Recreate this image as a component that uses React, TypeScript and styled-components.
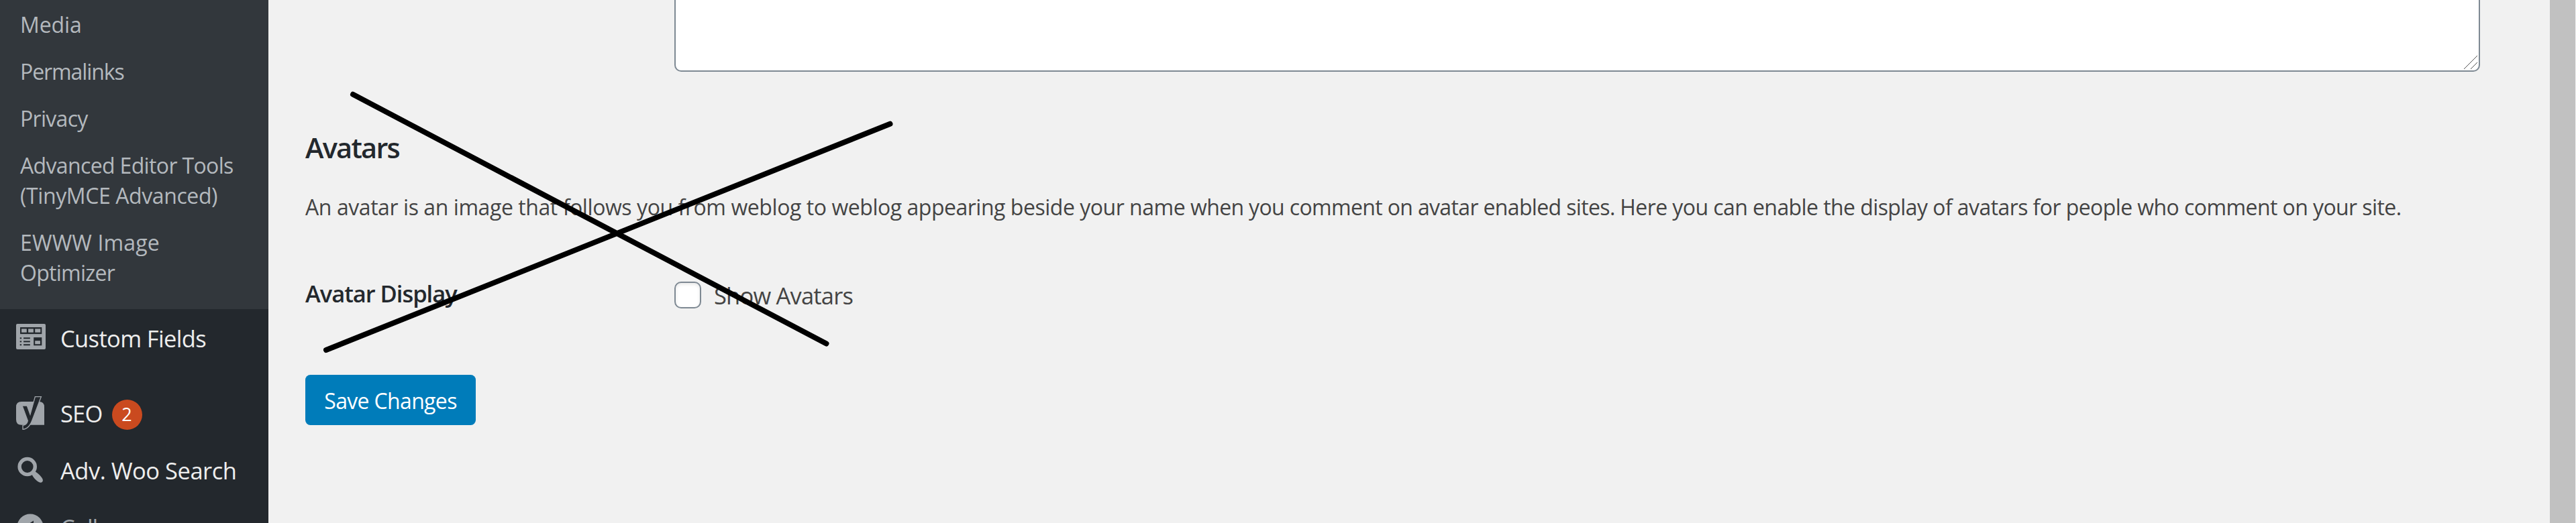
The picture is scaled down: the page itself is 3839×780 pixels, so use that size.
import React from "react";
import styled, { createGlobalStyle } from "styled-components";

const GlobalStyle = createGlobalStyle`
  *, *::before, *::after { box-sizing: border-box; }
  body {
    margin: 0;
    overflow: hidden;
    background: #f1f1f1;
    color: #444;
    font-family: "Open Sans", "Noto Sans", sans-serif;
  }
  svg { display: block; }
`;

const Page = styled.div`
  position: relative;
  display: flex;
  height: 780px;
  overflow: hidden;
`;

const Sidebar = styled.nav`
  flex: 0 0 400px;
  height: 780px;
  overflow: hidden;
  background: #23282d;
`;

const Submenu = styled.ul`
  height: 461px;
  margin: 0 0 1px;
  padding: 2px 0 0;
  list-style: none;
  background: #32373c;
`;

const SubmenuItem = styled.li`
  padding: 12px 20px 13px 30px;
  color: #b4b9be;
  font-size: 32px;
  line-height: 45px;
`;

const Line = styled.span<{ $tracking: number }>`
  display: block;
  white-space: nowrap;
  letter-spacing: ${(p) => p.$tracking}px;
`;

const MenuItem = styled.div<{ $muted?: boolean }>`
  display: flex;
  align-items: flex-start;
  height: 85px;
  color: ${(p) => (p.$muted ? "#a0a5aa" : "#eee")};
`;

const MenuSeparator = styled.div`
  height: 27px;
`;

const IconSlot = styled.span<{ $top: number; $left: number }>`
  flex: 0 0 90px;
  padding: ${(p) => p.$top}px 0 0 ${(p) => p.$left}px;
  color: #a0a5aa;
`;

const MenuLabel = styled.span<{ $tracking: number }>`
  margin-top: 20px;
  font-size: 34.5px;
  line-height: 45px;
  white-space: nowrap;
  letter-spacing: ${(p) => p.$tracking}px;
`;

const Badge = styled.span`
  width: 45px;
  height: 45px;
  margin: 22px 0 0 14px;
  border-radius: 50%;
  background: #ca4a1f;
  color: #fff;
  font-size: 27px;
  line-height: 44px;
  text-align: center;
`;

const Content = styled.main`
  flex: 1;
  display: flex;
  flex-direction: column;
  align-items: flex-start;
  padding-left: 55px;
`;

const TextArea = styled.div`
  display: flex;
  align-items: flex-end;
  justify-content: flex-end;
  width: 2691px;
  height: 107px;
  margin-left: 550px;
  padding: 0 2px 2px 0;
  border: 2px solid #7e8993;
  border-top: 0;
  border-radius: 0 0 10px 10px;
  background: #fff;
`;

const Heading = styled.h2`
  margin: 83px 0 0;
  color: #23282d;
  font-size: 41.5px;
  font-weight: 600;
  line-height: 60px;
  letter-spacing: -1.75px;
`;

const Description = styled.p`
  margin: 34px 0 0;
  font-size: 32px;
  line-height: 50px;
  white-space: nowrap;
`;

const Phrase = styled.span<{ $tracking: number }>`
  letter-spacing: ${(p) => p.$tracking}px;
`;

const FormRow = styled.div`
  display: flex;
  align-items: flex-start;
  height: 50px;
  margin-top: 81px;
`;

const FieldName = styled.div`
  width: 550px;
  color: #23282d;
  font-size: 34.5px;
  font-weight: 600;
  line-height: 46px;
  letter-spacing: -1.03px;
`;

const FieldLabel = styled.label`
  display: flex;
  align-items: flex-start;
  gap: 19px;
  font-size: 34.5px;
  line-height: 46px;
  letter-spacing: -0.8px;
`;

const FieldText = styled.span`
  margin-top: 3px;
`;

const Checkbox = styled.span`
  width: 40px;
  height: 40px;
  margin-top: 5px;
  border: 2px solid #7e8993;
  border-radius: 10px;
  background: #fff;
  box-shadow: inset 0 2px 5px rgba(0, 0, 0, 0.1);
`;

const SaveButton = styled.button`
  width: 254px;
  height: 75px;
  margin-top: 94px;
  padding: 2px 0 0;
  border: 0;
  border-radius: 7.5px;
  background: #007cba;
  color: #fff;
  font: inherit;
  font-size: 32px;
  line-height: 73px;
  letter-spacing: -0.66px;
`;

const ScrollTrack = styled.div`
  flex: 0 0 39px;
  padding-right: 1px;
`;

const ScrollThumb = styled.div`
  height: 780px;
  background: #c1c1c1;
`;

const CrossOut = styled.svg`
  position: absolute;
  top: 120px;
  left: 470px;
  pointer-events: none;
`;

const FieldsIcon = () => (
  <svg width="44" height="38" viewBox="73 129 131 113" fill="currentColor">
    <rect x="73" y="129" width="131" height="113" rx="6" />
    <g fill="#23282d">
      <rect x="91" y="144" width="96" height="30" />
      <rect x="151" y="189" width="36" height="36" />
      {[189.5, 204.5, 219].map((y) => (
        <g key={y}>
          <rect x="90" y={y} width="7" height="6" />
          <rect x="106" y={y} width="29" height="6" />
        </g>
      ))}
    </g>
    <rect x="97" y="151" width="23" height="16" />
    <rect x="127" y="151" width="23" height="16" />
    <rect x="157" y="151" width="24" height="16" />
    <rect x="157" y="204" width="23" height="15" />
  </svg>
);

const SeoIcon = () => (
  <svg width="60" height="60" viewBox="0 0 180 180">
    <path
      fill="currentColor"
      d="M48 42H126Q150 42 150 66V146H48Q24 146 24 122V66Q24 42 48 42Z"
    />
    <path
      fill="#23282d"
      stroke="currentColor"
      strokeWidth="4"
      d="M109 20H136L98 120Q83 164 54 166V148Q72 146 76 128L51 60H73L87 99Z"
    />
  </svg>
);

const SearchIcon = () => (
  <svg width="60" height="45" viewBox="16 675 60 45" fill="none" stroke="currentColor">
    <circle cx="40.7" cy="696" r="11.6" strokeWidth="5.4" />
    <path
      fill="currentColor"
      stroke="none"
      d="M47 706.5L51 702.2C55 704.5 61 709.5 63 713.5C65.6 718.2 62 721 58 719C53.5 716.5 49 711.5 47 706.5Z"
    />
  </svg>
);

const CollapseIcon = () => (
  <svg width="50" height="50" viewBox="0 0 20 20">
    <circle cx="10" cy="10" r="7.84" fill="currentColor" />
    <path d="M12 14V6.2L6.2 10Z" fill="#23282d" />
  </svg>
);

const submenu: { text: string; tracking: number }[][] = [
  [{ text: "Media", tracking: -0.1 }],
  [{ text: "Permalinks", tracking: -1.1 }],
  [{ text: "Privacy", tracking: -0.7 }],
  [
    { text: "Advanced Editor Tools", tracking: -0.65 },
    { text: "(TinyMCE Advanced)", tracking: -0.4 },
  ],
  [
    { text: "EWWW Image", tracking: 0.15 },
    { text: "Optimizer", tracking: -0.74 },
  ],
];

export default function App() {
  return (
    <Page>
      <GlobalStyle />
      <Sidebar>
        <Submenu>
          {submenu.map((lines) => (
            <SubmenuItem key={lines[0].text}>
              {lines.map((l) => (
                <Line key={l.text} $tracking={l.tracking}>
                  {l.text}
                </Line>
              ))}
            </SubmenuItem>
          ))}
        </Submenu>
        <MenuItem>
          <IconSlot $top={21} $left={24}>
            <FieldsIcon />
          </IconSlot>
          <MenuLabel $tracking={-0.65}>Custom Fields</MenuLabel>
        </MenuItem>
        <MenuSeparator />
        <MenuItem>
          <IconSlot $top={11} $left={16}>
            <SeoIcon />
          </IconSlot>
          <MenuLabel $tracking={-0.8}>SEO</MenuLabel>
          <Badge>2</Badge>
        </MenuItem>
        <MenuItem>
          <IconSlot $top={16} $left={16}>
            <SearchIcon />
          </IconSlot>
          <MenuLabel $tracking={-0.49}>Adv. Woo Search</MenuLabel>
        </MenuItem>
        <MenuItem $muted>
          <IconSlot $top={17} $left={20}>
            <CollapseIcon />
          </IconSlot>
          <MenuLabel $tracking={-1.2}>Collapse menu</MenuLabel>
        </MenuItem>
      </Sidebar>
      <Content>
        <TextArea>
          <svg width="20" height="20" viewBox="0 0 20 20" stroke="#555" strokeWidth="1">
            <path d="M0 20L20 0M10 20L20 10" />
          </svg>
        </TextArea>
        <Heading>Avatars</Heading>
        <Description>
          <Phrase $tracking={-0.43}>
            An avatar is an image that follows you from weblog to{" "}
          </Phrase>
          <Phrase $tracking={-0.48}>weblog appearing beside your name </Phrase>
          <Phrase $tracking={-0.65}>when you comment on avatar enabled sites. </Phrase>
          <Phrase $tracking={-0.58}>
            Here you can enable the display of avatars for people who comment on your site.
          </Phrase>
        </Description>
        <FormRow>
          <FieldName>Avatar Display</FieldName>
          <FieldLabel>
            <Checkbox role="checkbox" aria-checked="false" />
            <FieldText>Show Avatars</FieldText>
          </FieldLabel>
        </FormRow>
        <SaveButton>Save Changes</SaveButton>
      </Content>
      <ScrollTrack>
        <ScrollThumb />
      </ScrollTrack>
      <CrossOut
        width="880"
        height="420"
        viewBox="470 120 880 420"
        stroke="#000"
        strokeWidth="8"
        strokeLinecap="round"
      >
        <path d="M526 140.8L1231.5 512.5M486 522L1326.5 184.7" />
      </CrossOut>
    </Page>
  );
}
